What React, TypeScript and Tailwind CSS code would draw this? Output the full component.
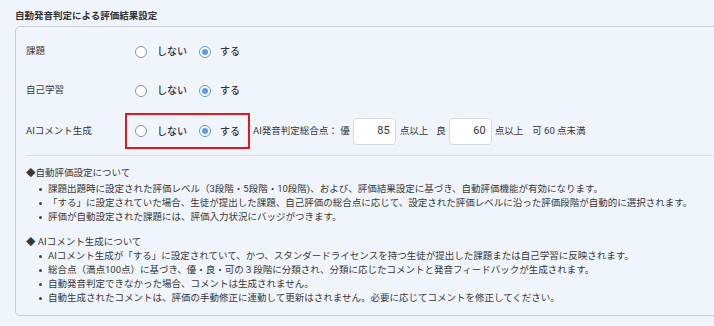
import React from "react";

const font = { fontFamily: 'Roboto, "Noto Sans CJK JP", sans-serif' };

function Radio({ checked }: { checked: boolean }) {
  return checked ? (
    <span className="flex h-[12px] w-[12px] items-center justify-center rounded-full border-[1.5px] border-[#5b9be6] bg-white">
      <span className="h-[6px] w-[6px] rounded-full bg-[#5b9be6]" />
    </span>
  ) : (
    <span className="h-[12px] w-[12px] rounded-full border-[1.5px] border-[#939393] bg-white" />
  );
}

function RadioGroup() {
  return (
    <div className="flex items-center text-[10px] font-medium text-[#333]">
      <Radio checked={false} />
      <span className="ml-[10px]">しない</span>
      <span className="ml-[12px]">
        <Radio checked={true} />
      </span>
      <span className="ml-[9px]">する</span>
    </div>
  );
}

function Bullet({ children }: { children: React.ReactNode }) {
  return (
    <div className="flex h-[14px] items-center">
      <span className="ml-[13px] h-[3px] w-[3px] rounded-full bg-[#444]" />
      <span className="ml-[6px] whitespace-nowrap">{children}</span>
    </div>
  );
}

export default function App() {
  return (
    <div
      className="h-[326px] w-[714px] overflow-hidden bg-[#f0f5fc] text-[#383838]"
      style={font}
    >
      <div className="px-[15px] pt-[10px] text-[9.5px] font-bold leading-[12px] text-[#333]">
        自動発音判定による評価結果設定
      </div>
      <div className="ml-[15px] mt-[4px] w-[720px] rounded-[5px] border border-[#c9ccd0] pl-[10px] pr-[10px] pt-[5px] pb-[10px]">
        <div className="flex h-[39px] items-center text-[9.5px]">
          <div className="w-[109px]">課題</div>
          <RadioGroup />
        </div>
        <div className="flex h-[39px] items-center text-[9.5px]">
          <div className="w-[109px]">自己学習</div>
          <RadioGroup />
        </div>
        <div className="relative flex h-[42px] items-center text-[9.5px]">
          <div className="w-[109px]">AIコメント生成</div>
          <RadioGroup />
          <div className="pointer-events-none absolute left-[99px] top-[3px] h-[36px] w-[125px] border-2 border-[#e8141e]" />
          <span className="ml-[13px]">AI発音判定総合点： 優</span>
          <div className="ml-[3px] flex h-[27px] w-[43px] items-center justify-end rounded-[4px] border border-[#d6d9dd] bg-white pr-[5px] text-[11px] text-[#333]">
            85
          </div>
          <span className="ml-[4px]">点以上</span>
          <span className="ml-[8px]">良</span>
          <div className="ml-[3px] flex h-[27px] w-[43px] items-center justify-end rounded-[4px] border border-[#d6d9dd] bg-white pr-[5px] text-[11px] text-[#333]">
            60
          </div>
          <span className="ml-[3px]">点以上</span>
          <span className="ml-[9px]">可 60 点未満</span>
        </div>
        <div className="mt-[3px] border-t border-[#dcdfe3]" />
        <div className="pt-[10px] text-[9.5px] leading-[14px]">
          <div className="h-[14px]">◆自動評価設定について</div>
          <div className="mt-[2px]">
            <Bullet>課題出題時に設定された評価レベル（3段階・5段階・10段階)、および、評価結果設定に基づき、自動評価機能が有効になります。</Bullet>
            <Bullet>「する」に設定されていた場合、生徒が提出した課題、自己評価の総合点に応じて、設定された評価レベルに沿った評価段階が自動的に選択されます。</Bullet>
            <Bullet>評価が自動設定された課題には、評価入力状況にバッジがつきます。</Bullet>
          </div>
          <div className="mt-[11px] h-[14px]">◆ AIコメント生成について</div>
          <div>
            <Bullet>AIコメント生成が「する」に設定されていて、かつ、スタンダードライセンスを持つ生徒が提出した課題または自己学習に反映されます。</Bullet>
            <Bullet>総合点（満点100点）に基づき、優・良・可の３段階に分類され、分類に応じたコメントと発音フィードバックが生成されます。</Bullet>
            <Bullet>自動発音判定できなかった場合、コメントは生成されません。</Bullet>
            <Bullet>自動生成されたコメントは、評価の手動修正に連動して更新はされません。必要に応じてコメントを修正してください。</Bullet>
          </div>
        </div>
      </div>
    </div>
  );
}
